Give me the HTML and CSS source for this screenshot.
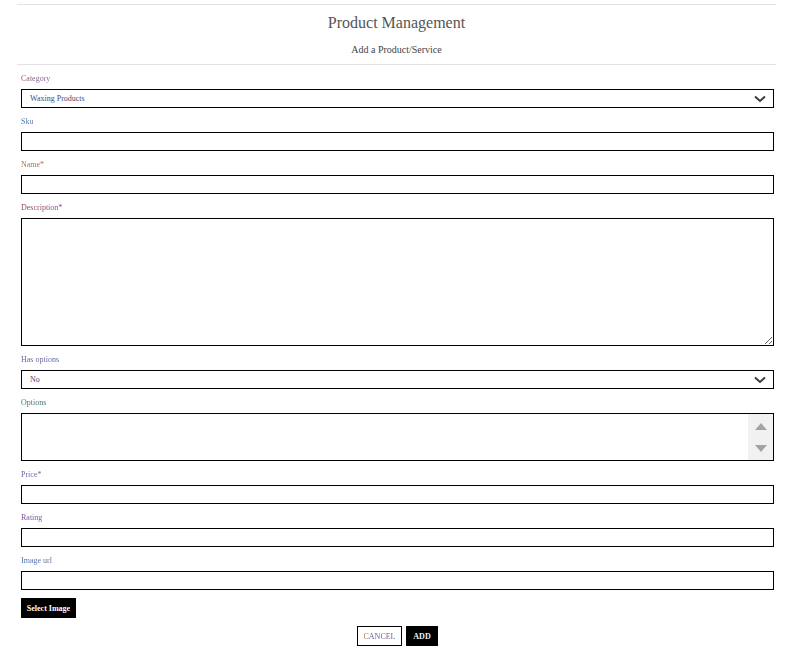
FILE: index.html
```html
<!DOCTYPE html>
<html>
<head>
<meta charset="utf-8">
<title>Product Management</title>
<link rel="stylesheet" href="styles.css">
</head>
<body>
<div class="page">
  <header class="head">
    <h1 class="title">Product Management</h1>
    <h2 class="subtitle">Add a Product/Service</h2>
  </header>
  <form class="form">
    <div class="field">
      <label class="lbl c1">Category</label>
      <div class="select-wrap">
        <select class="ctl"><option>Waxing Products</option></select>
        <svg class="chev" width="12" height="8" viewBox="0 0 12 8"><polyline points="1,1.5 6,6 11,1.5" fill="none" stroke="#3d3d3d" stroke-width="2"/></svg>
      </div>
    </div>
    <div class="field">
      <label class="lbl c2">Sku</label>
      <input class="ctl" type="text">
    </div>
    <div class="field">
      <label class="lbl c3">Name*</label>
      <input class="ctl" type="text">
    </div>
    <div class="field">
      <label class="lbl c4">Description*</label>
      <textarea class="ctl area"></textarea>
    </div>
    <div class="field">
      <label class="lbl c5">Has options</label>
      <div class="select-wrap">
        <select class="ctl"><option>No</option></select>
        <svg class="chev" width="12" height="8" viewBox="0 0 12 8"><polyline points="1,1.5 6,6 11,1.5" fill="none" stroke="#3d3d3d" stroke-width="2"/></svg>
      </div>
    </div>
    <div class="field">
      <label class="lbl c6">Options</label>
      <div class="listbox">
        <div class="list-body"></div>
        <div class="scrollbar">
          <svg width="12" height="7" viewBox="0 0 12 7"><polygon points="0,7 6,0 12,7" fill="#a3a3a3"/></svg>
          <svg width="12" height="7" viewBox="0 0 12 7"><polygon points="0,0 12,0 6,7" fill="#a3a3a3"/></svg>
        </div>
      </div>
    </div>
    <div class="field">
      <label class="lbl c7">Price*</label>
      <input class="ctl" type="text">
    </div>
    <div class="field">
      <label class="lbl c8">Rating</label>
      <input class="ctl" type="text">
    </div>
    <div class="field">
      <label class="lbl c9">Image url</label>
      <input class="ctl" type="text">
    </div>
    <div class="field">
      <button type="button" class="btn dark sel">Select Image</button>
    </div>
    <div class="actions">
      <button type="button" class="btn light"><span class="grad">CANCEL</span></button>
      <button type="button" class="btn dark add">ADD</button>
    </div>
  </form>
</div>
</body>
</html>
```

FILE: styles.css
```css
* { box-sizing: border-box; }
html, body { margin: 0; padding: 0; background: #fff; }
body { font-family: "Liberation Serif", "Times New Roman", serif; }

.page { margin: 4px 16px 0 17px; }

.head {
  border-top: 1px solid #e3e3e3;
  border-bottom: 1px solid #e3e3e3;
  text-align: center;
  padding: 8px 0 8px;
}
.title {
  margin: 0;
  font-size: 16px;
  line-height: 20px;
  font-weight: normal;
  color: #555;
}
.subtitle {
  margin: 11px 0 0;
  font-size: 10px;
  line-height: 12px;
  font-weight: normal;
  color: #444;
}

.form { padding: 0 2px 0 4px; }

.field { margin-top: 8px; }

.lbl {
  display: block;
  font-size: 8px;
  line-height: 10px;
  padding-top: 1px;
  margin-bottom: 5px;
  color: #777;
  background-clip: text;
  -webkit-background-clip: text;
  -webkit-text-fill-color: transparent;
  width: max-content;
}
.c1 { background-image: linear-gradient(90deg, #a8506e, #7a5a98, #a06080); }
.c2 { background-image: linear-gradient(90deg, #3a6eb0, #5a7ab0); }
.c3 { background-image: linear-gradient(90deg, #a86a38, #907060, #b85a40); }
.c4 { background-image: linear-gradient(90deg, #8a4050, #944a70, #6a5088); }
.c5 { background-image: linear-gradient(90deg, #5a62a0, #6c5a90, #4a6aa0); }
.c6 { background-image: linear-gradient(90deg, #2a7a70, #4a7060, #3a6a80); }
.c7 { background-image: linear-gradient(90deg, #5a5aa8, #7a6098); }
.c8 { background-image: linear-gradient(90deg, #7a4a90, #6a5aa0); }
.c9 { background-image: linear-gradient(90deg, #3a6ab0, #5a70a8, #6a60a0); }

.ctl {
  display: block;
  width: 100%;
  height: 19px;
  margin: 0;
  border: 1px solid #000;
  border-radius: 0;
  background: #fff;
  font-family: "Liberation Serif", "Times New Roman", serif;
  font-size: 8px;
  color: #4a4a70;
  padding: 0 8px;
  outline: none;
}
select.ctl {
  appearance: none;
  -webkit-appearance: none;
}
.select-wrap { position: relative; }
.chev {
  position: absolute;
  right: 8px;
  top: 6px;
  pointer-events: none;
}
.area {
  height: 128px;
  resize: both;
  padding: 4px 8px;
}

.listbox {
  display: flex;
  height: 48px;
  border: 1px solid #000;
}
.list-body { flex: 1; }
.scrollbar {
  width: 25px;
  background: #f1f1f1;
  display: flex;
  flex-direction: column;
  align-items: center;
  justify-content: space-between;
  padding: 9px 0 8px;
}

.btn {
  display: block;
  font-family: "Liberation Serif", "Times New Roman", serif;
  font-size: 8px;
  height: 20px;
  margin: 0;
  border-radius: 0;
  cursor: pointer;
}
.dark {
  background: #000;
  color: #fff;
  border: none;
  font-weight: bold;
  padding: 0 6px;
}
.sel { width: 55px; padding: 0; }
.light {
  background: #fff;
  border: 1px solid #000;
  padding: 0;
  width: 45px;
}
.grad {
  background-image: linear-gradient(90deg, #a06040, #4a5aa8, #905878, #3a6ab0);
  background-clip: text;
  -webkit-background-clip: text;
  -webkit-text-fill-color: transparent;
}
.add { color: #e8f0ff; width: 32px; padding: 0; }

.actions {
  display: flex;
  justify-content: center;
  gap: 4px;
  margin-top: 8px;
}
```
